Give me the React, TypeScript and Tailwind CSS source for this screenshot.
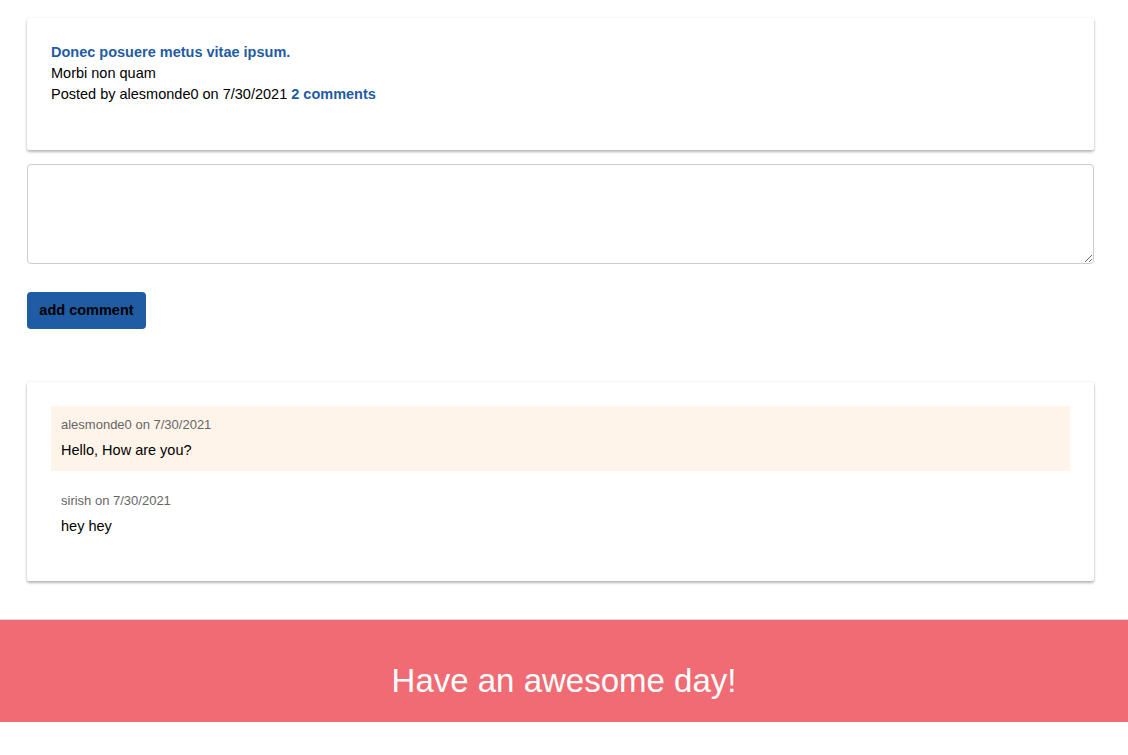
export default function App() {
  return (
    <div className="min-h-[755px] bg-white font-['Liberation_Sans',Arial,sans-serif] text-black">
      <div className="ml-[27px] w-[1067px] pt-[18px]">
        <div className="h-[132px] rounded-[2px] bg-white px-6 pt-[24px] text-[14.5px] leading-[21px] shadow-[0_2px_3px_rgba(0,0,0,0.28),0_0_2px_rgba(0,0,0,0.1)]">
          <div className="font-bold text-[#1f5ca3]">Donec posuere metus vitae ipsum.</div>
          <div>Morbi non quam</div>
          <div>
            Posted by alesmonde0 on 7/30/2021{" "}
            <span className="font-bold text-[#1f5ca3]">2 comments</span>
          </div>
        </div>
        <textarea className="mt-[14px] block h-[100px] w-full rounded-[4px] border border-[#cccccc] bg-white p-2 text-[14px]" />
        <button className="mt-[28px] block h-[37px] w-[119px] rounded-[4px] bg-[#1f5ca3] text-[14.5px] font-bold text-black">
          add comment
        </button>
        <div className="mt-[53px] rounded-[2px] bg-white px-6 pt-6 pb-[21px] shadow-[0_2px_3px_rgba(0,0,0,0.28),0_0_2px_rgba(0,0,0,0.1)]">
          <div className="mb-[12px] h-[65px] bg-[#fef4ea] px-[10px] pt-[10px]">
            <div className="text-[13px] leading-[18px] text-[#666666]">alesmonde0 on 7/30/2021</div>
            <div className="mt-[6px] text-[14.5px] leading-[20px]">Hello, How are you?</div>
          </div>
          <div className="mb-[12px] h-[65px] px-[10px] pt-[9px]">
            <div className="text-[13px] leading-[18px] text-[#666666]">sirish on 7/30/2021</div>
            <div className="mt-[6px] text-[14.5px] leading-[20px]">hey hey</div>
          </div>
        </div>
      </div>
      <div className="mt-[38px] flex h-[103px] items-center justify-center border-t border-[#d9d9d9] bg-[#f06b73] pt-[20px] text-[33px] text-white">
        Have an awesome day!
      </div>
    </div>
  );
}
